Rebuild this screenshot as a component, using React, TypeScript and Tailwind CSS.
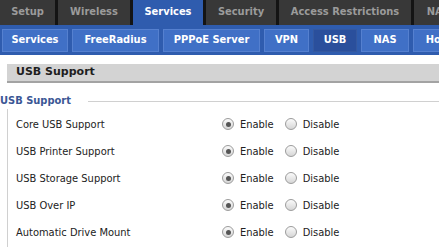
const font = { fontFamily: '"DejaVu Sans Condensed", "DejaVu Sans", sans-serif' };

const topTabs = [
  { label: "Setup", w: "w-[55px]" },
  { label: "Wireless", w: "w-[72px]" },
  { label: "Services", w: "w-[70px]", active: true },
  { label: "Security", w: "w-[70px]" },
  { label: "Access Restrictions", w: "w-[132px]" },
  { label: "NAT / QoS", w: "w-[80px]" },
];

const subTabs = [
  { label: "Services", w: "w-[66px]" },
  { label: "FreeRadius", w: "w-[87px]" },
  { label: "PPPoE Server", w: "w-[97px]" },
  { label: "VPN", w: "w-[45px]" },
  { label: "USB", w: "w-[44px]", active: true },
  { label: "NAS", w: "w-[48px]" },
  { label: "Hotspot", w: "w-[70px]" },
];

const rows = [
  "Core USB Support",
  "USB Printer Support",
  "USB Storage Support",
  "USB Over IP",
  "Automatic Drive Mount",
];

const Radio = ({ checked }: { checked?: boolean }) => (
  <span className="mb-[3px] flex h-[12px] w-[12px] shrink-0 items-center justify-center rounded-full border border-[#9c9c9c] bg-gradient-to-b from-[#fbfbfb] to-[#d6d6d6]">
    {checked && <span className="h-[5px] w-[5px] rounded-full bg-[#555]" />}
  </span>
);

export default function App() {
  return (
    <div className="h-[248px] w-[439px] overflow-hidden bg-white" style={font}>
      {/* main tabs */}
      <div className="flex h-[25px] gap-[3px] bg-[#141414]">
        {topTabs.map((t) => (
          <div
            key={t.label}
            className={`flex shrink-0 items-center justify-center whitespace-nowrap text-[11px] font-bold font-stretch-condensed ${t.w} ${
              t.active ? "bg-[#2f5cae] text-white" : "bg-[#383838] text-[#9b9b9b]"
            }`}
          >
            {t.label}
          </div>
        ))}
      </div>

      {/* sub tabs */}
      <div className="flex h-[30px] items-center gap-[4px] bg-[#2f5cae] pl-[2px] pt-[1px]">
        {subTabs.map((t) => (
          <div
            key={t.label}
            className={`flex h-[23px] shrink-0 items-center justify-center whitespace-nowrap border text-[11px] font-bold text-white font-stretch-condensed ${t.w} ${
              t.active ? "border-[#34589f] bg-[#2a4f9c]" : "border-[#5580cf] bg-[#4070c6]"
            }`}
          >
            {t.label}
          </div>
        ))}
      </div>

      {/* section header */}
      <div className="mt-[9px] pl-[7px]">
        <div
          className="flex h-[19px] items-center border-b-2 border-[#a3a3a3] bg-[#d3d3d3] pl-[9px] text-[11px] font-bold text-[#1e1e1e]"
          style={{ fontFamily: '"DejaVu Sans", sans-serif' }}
        >
          USB Support
        </div>
      </div>

      {/* fieldset */}
      <div className="mt-[10px] flex h-[16px] items-center">
        <span className="text-[11px] font-bold text-[#3b5795] font-stretch-condensed">USB Support</span>
        <div className="ml-[17px] h-px flex-1 bg-[#d0d0d0]" />
      </div>
      <div className="ml-[7px] border-l border-[#d0d0d0] pl-[8px] pt-[3px]">
        {rows.map((r) => (
          <div key={r} className="flex h-[27px] items-center text-[11px] text-[#222] font-stretch-condensed">
            <span className="w-[206px] shrink-0">{r}</span>
            <Radio checked />
            <span className="ml-[6px]">Enable</span>
            <span className="ml-[11px]">
              <Radio />
            </span>
            <span className="ml-[6px]">Disable</span>
          </div>
        ))}
      </div>
    </div>
  );
}
